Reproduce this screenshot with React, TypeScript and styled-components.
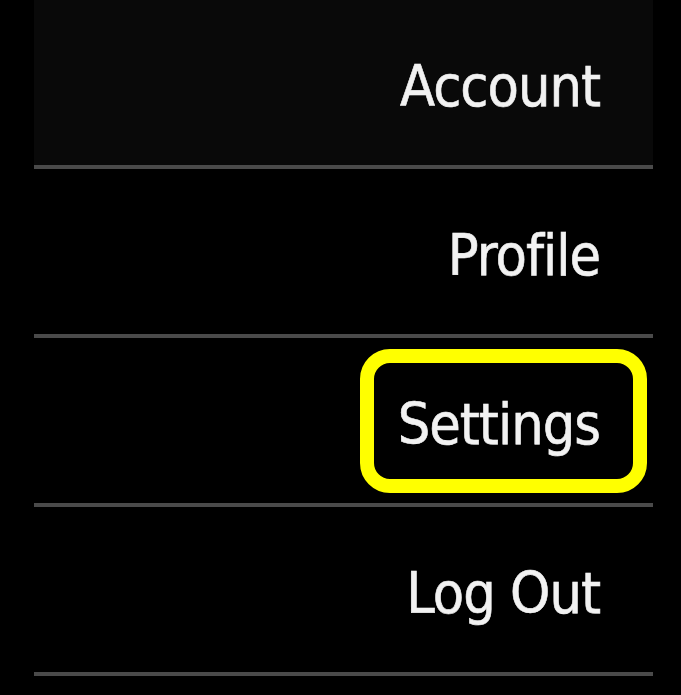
import React from "react";
import styled, { createGlobalStyle } from "styled-components";

const GlobalStyle = createGlobalStyle`
  html, body {
    margin: 0;
    padding: 0;
    background-color: #000;
  }
`;

const Page = styled.div`
  width: 681px;
  height: 695px;
  overflow: hidden;
  background-color: #000;
`;

const Menu = styled.nav`
  display: flex;
  flex-direction: column;
  width: 619px;
  margin-left: 34px;
`;

const Item = styled.div<{ $active?: boolean }>`
  display: flex;
  justify-content: flex-end;
  align-items: center;
  height: 165px;
  padding-right: 20px;
  border-bottom: 4px solid #4a4a4a;
  background-color: ${(p) => (p.$active ? "#090909" : "#000")};
`;

const Link = styled.a<{ $focused?: boolean }>`
  display: block;
  box-sizing: border-box;
  height: 116px;
  padding: 6px 33px 0 24px;
  line-height: 110px;
  border-radius: 16px;
  font-family: "DejaVu Sans Condensed", "DejaVu Sans", sans-serif;
  font-stretch: condensed;
  font-size: 57px;
  letter-spacing: -1px;
  color: #f2f2f2;
  -webkit-text-stroke: 0.6px #f2f2f2;
  text-decoration: none;
  outline: ${(p) => (p.$focused ? "14px solid #ffff00" : "none")};
`;

const items = [
  { label: "Account", active: true },
  { label: "Profile" },
  { label: "Settings", focused: true },
  { label: "Log Out" },
];

const App = () => {
  return (
    <Page>
      <GlobalStyle />
      <Menu>
        {items.map((item) => (
          <Item key={item.label} $active={item.active}>
            <Link href="#" $focused={item.focused}>
              {item.label}
            </Link>
          </Item>
        ))}
      </Menu>
    </Page>
  );
};

export default App;
